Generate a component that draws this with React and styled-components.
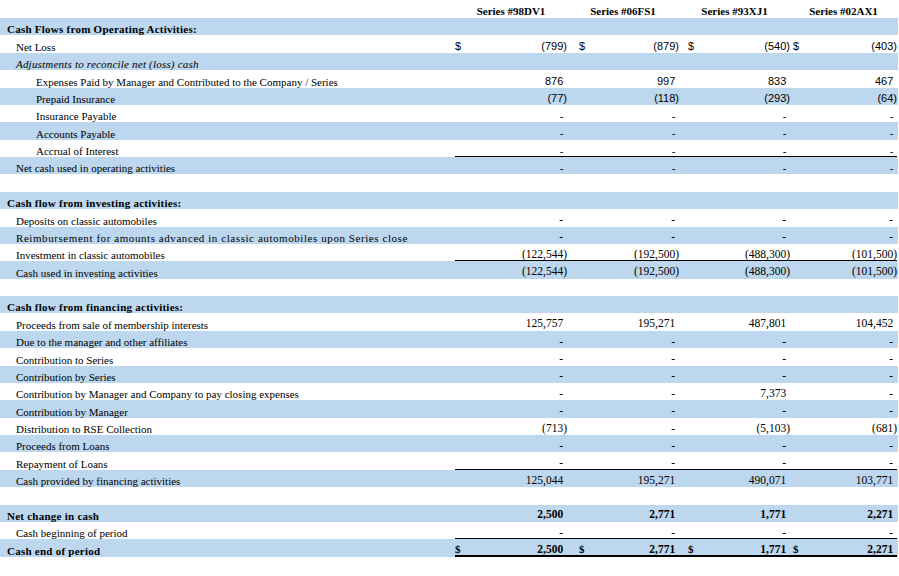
import styled, { createGlobalStyle } from "styled-components";

const GlobalStyle = createGlobalStyle`
  html, body {
    margin: 0;
    padding: 0;
    background: #fff;
  }
  body {
    font-family: "Liberation Serif", "Times New Roman", serif;
    color: #000;
  }
`;

// per column: width and where the $ sits from the column's left edge
const columns = [
  { name: "Series #98DV1", w: 112, lead: 0 },
  { name: "Series #06FS1", w: 112, lead: 12 },
  { name: "Series #93XJ1", w: 111, lead: 9 },
  { name: "Series #02AX1", w: 107, lead: 3 },
];

const dash = ["-", "-", "-", "-"];

const rows = [
  { label: "Cash Flows from Operating Activities:", level: 0, bold: true },
  { label: "Net Loss", level: 1, values: ["(799)", "(879)", "(540)", "(403)"], dollar: true, sans: true },
  { label: "Adjustments to reconcile net (loss) cash", level: 1, italic: true },
  { label: "Expenses Paid by Manager and Contributed to the Company / Series", level: 2, values: ["876", "997", "833", "467"], sans: true },
  { label: "Prepaid Insurance", level: 2, values: ["(77)", "(118)", "(293)", "(64)"], sans: true },
  { label: "Insurance Payable", level: 2, values: dash, sans: true },
  { label: "Accounts Payable", level: 2, values: dash, sans: true },
  { label: "Accrual of Interest", level: 2, values: dash, sans: true, rule: true },
  { label: "Net cash used in operating activities", level: 1, values: dash, sans: true },
  {},
  { label: "Cash flow from investing activities:", level: 0, bold: true },
  { label: "Deposits on classic automobiles", level: 1, values: dash },
  { label: "Reimbursement for amounts advanced in classic automobiles upon Series close", level: 1, values: dash, spread: 0.3 },
  { label: "Investment in classic automobiles", level: 1, values: ["(122,544)", "(192,500)", "(488,300)", "(101,500)"], rule: true },
  { label: "Cash used in investing activities", level: 1, values: ["(122,544)", "(192,500)", "(488,300)", "(101,500)"] },
  {},
  { label: "Cash flow from financing activities:", level: 0, bold: true },
  { label: "Proceeds from sale of membership interests", level: 1, values: ["125,757", "195,271", "487,801", "104,452"] },
  { label: "Due to the manager and other affiliates", level: 1, values: dash },
  { label: "Contribution to Series", level: 1, values: dash },
  { label: "Contribution by Series", level: 1, values: dash },
  { label: "Contribution by Manager and Company to pay closing expenses", level: 1, values: ["-", "-", "7,373", "-"] },
  { label: "Contribution by Manager", level: 1, values: dash },
  { label: "Distribution to RSE Collection", level: 1, values: ["(713)", "-", "(5,103)", "(681)"] },
  { label: "Proceeds from Loans", level: 1, values: dash },
  { label: "Repayment of  Loans", level: 1, values: dash, rule: true },
  { label: "Cash provided by financing activities", level: 1, values: ["125,044", "195,271", "490,071", "103,771"] },
  {},
  { label: "Net change in cash", level: 0, bold: true, values: ["2,500", "2,771", "1,771", "2,271"] },
  { label: "Cash beginning of period", level: 1, values: dash, rule: true },
  { label: "Cash end of period", level: 0, bold: true, values: ["2,500", "2,771", "1,771", "2,271"], dollar: true, double: true },
];

const indents = [7, 16, 36];

export default function App() {
  return (
    <>
      <GlobalStyle />
      <Sheet>
        <HeadRow>
          <span />
          {columns.map((c) => (
            <HeadCell key={c.name}>{c.name}</HeadCell>
          ))}
        </HeadRow>
        {rows.map((r, i) => (
          <Row key={i} $shade={i % 2 === 0}>
            <Label
              $indent={indents[r.level || 0]}
              $bold={r.bold}
              $italic={r.italic}
              $spread={r.spread}
            >
              {r.label}
            </Label>
            {columns.map((c, j) => {
              const v = r.values ? r.values[j] : "";
              const neg = v.startsWith("(");
              return (
                <Amount
                  key={c.name}
                  $lead={c.lead}
                  $rule={r.double ? 2 : r.rule ? 1 : 0}
                  $bold={r.bold}
                  $sans={r.sans}
                >
                  <Dollar $sans={r.sans}>{r.dollar ? "$" : ""}</Dollar>
                  {v && (
                    <span>
                      {v}
                      {!neg && <Pad>)</Pad>}
                    </span>
                  )}
                </Amount>
              );
            })}
          </Row>
        ))}
      </Sheet>
    </>
  );
}

const gridCols = `455px ${columns.map((c) => c.w + "px").join(" ")}`;

const Sheet = styled.div`
  width: 898px;
  display: flex;
  flex-direction: column;
`;

const HeadRow = styled.div`
  display: grid;
  grid-template-columns: ${gridCols};
  height: 18px;
  align-items: end;
`;

const HeadCell = styled.div`
  text-align: center;
  font-weight: bold;
  font-size: 11px;
  line-height: 13px;
  white-space: nowrap;
`;

const Row = styled.div`
  display: grid;
  grid-template-columns: ${gridCols};
  align-items: end;
  height: 17.38px;
  background: ${(p) => (p.$shade ? "#bdd7ee" : "#fff")};
`;

const Label = styled.div`
  padding-left: ${(p) => p.$indent}px;
  font-size: 11px;
  line-height: 12px;
  white-space: nowrap;
  letter-spacing: ${(p) =>
    p.$spread ? p.$spread + 0.27 : p.$bold ? 0.25 : p.$italic ? 0.2 : 0}px;
  font-weight: ${(p) => (p.$bold ? "bold" : "normal")};
  font-style: ${(p) => (p.$italic ? "italic" : "normal")};
`;

const Amount = styled.div`
  align-self: stretch;
  display: flex;
  justify-content: space-between;
  align-items: flex-end;
  padding-left: ${(p) => p.$lead}px;
  padding-bottom: ${(p) => (p.$sans ? 0 : p.$rule === 2 ? 2 : 1.5)}px;
  font-family: ${(p) =>
    p.$sans ? '"Liberation Sans", Arial, sans-serif' : '"Liberation Serif", "Times New Roman", serif'};
  font-size: ${(p) => (p.$sans ? "11px" : "11.5px")};
  font-weight: ${(p) => (p.$bold ? "bold" : "normal")};
  line-height: ${(p) => (p.$sans ? "11.5px" : "12px")};
  white-space: nowrap;
  box-shadow: ${(p) => (p.$rule ? `inset 0 -${p.$rule}px 0 #000` : "none")};
`;

const Dollar = styled.span`
  font-family: ${(p) =>
    p.$sans ? '"Liberation Sans", Arial, sans-serif' : '"Liberation Serif", "Times New Roman", serif'};
  font-size: 11px;
`;

const Pad = styled.span`
  visibility: hidden;
`;
